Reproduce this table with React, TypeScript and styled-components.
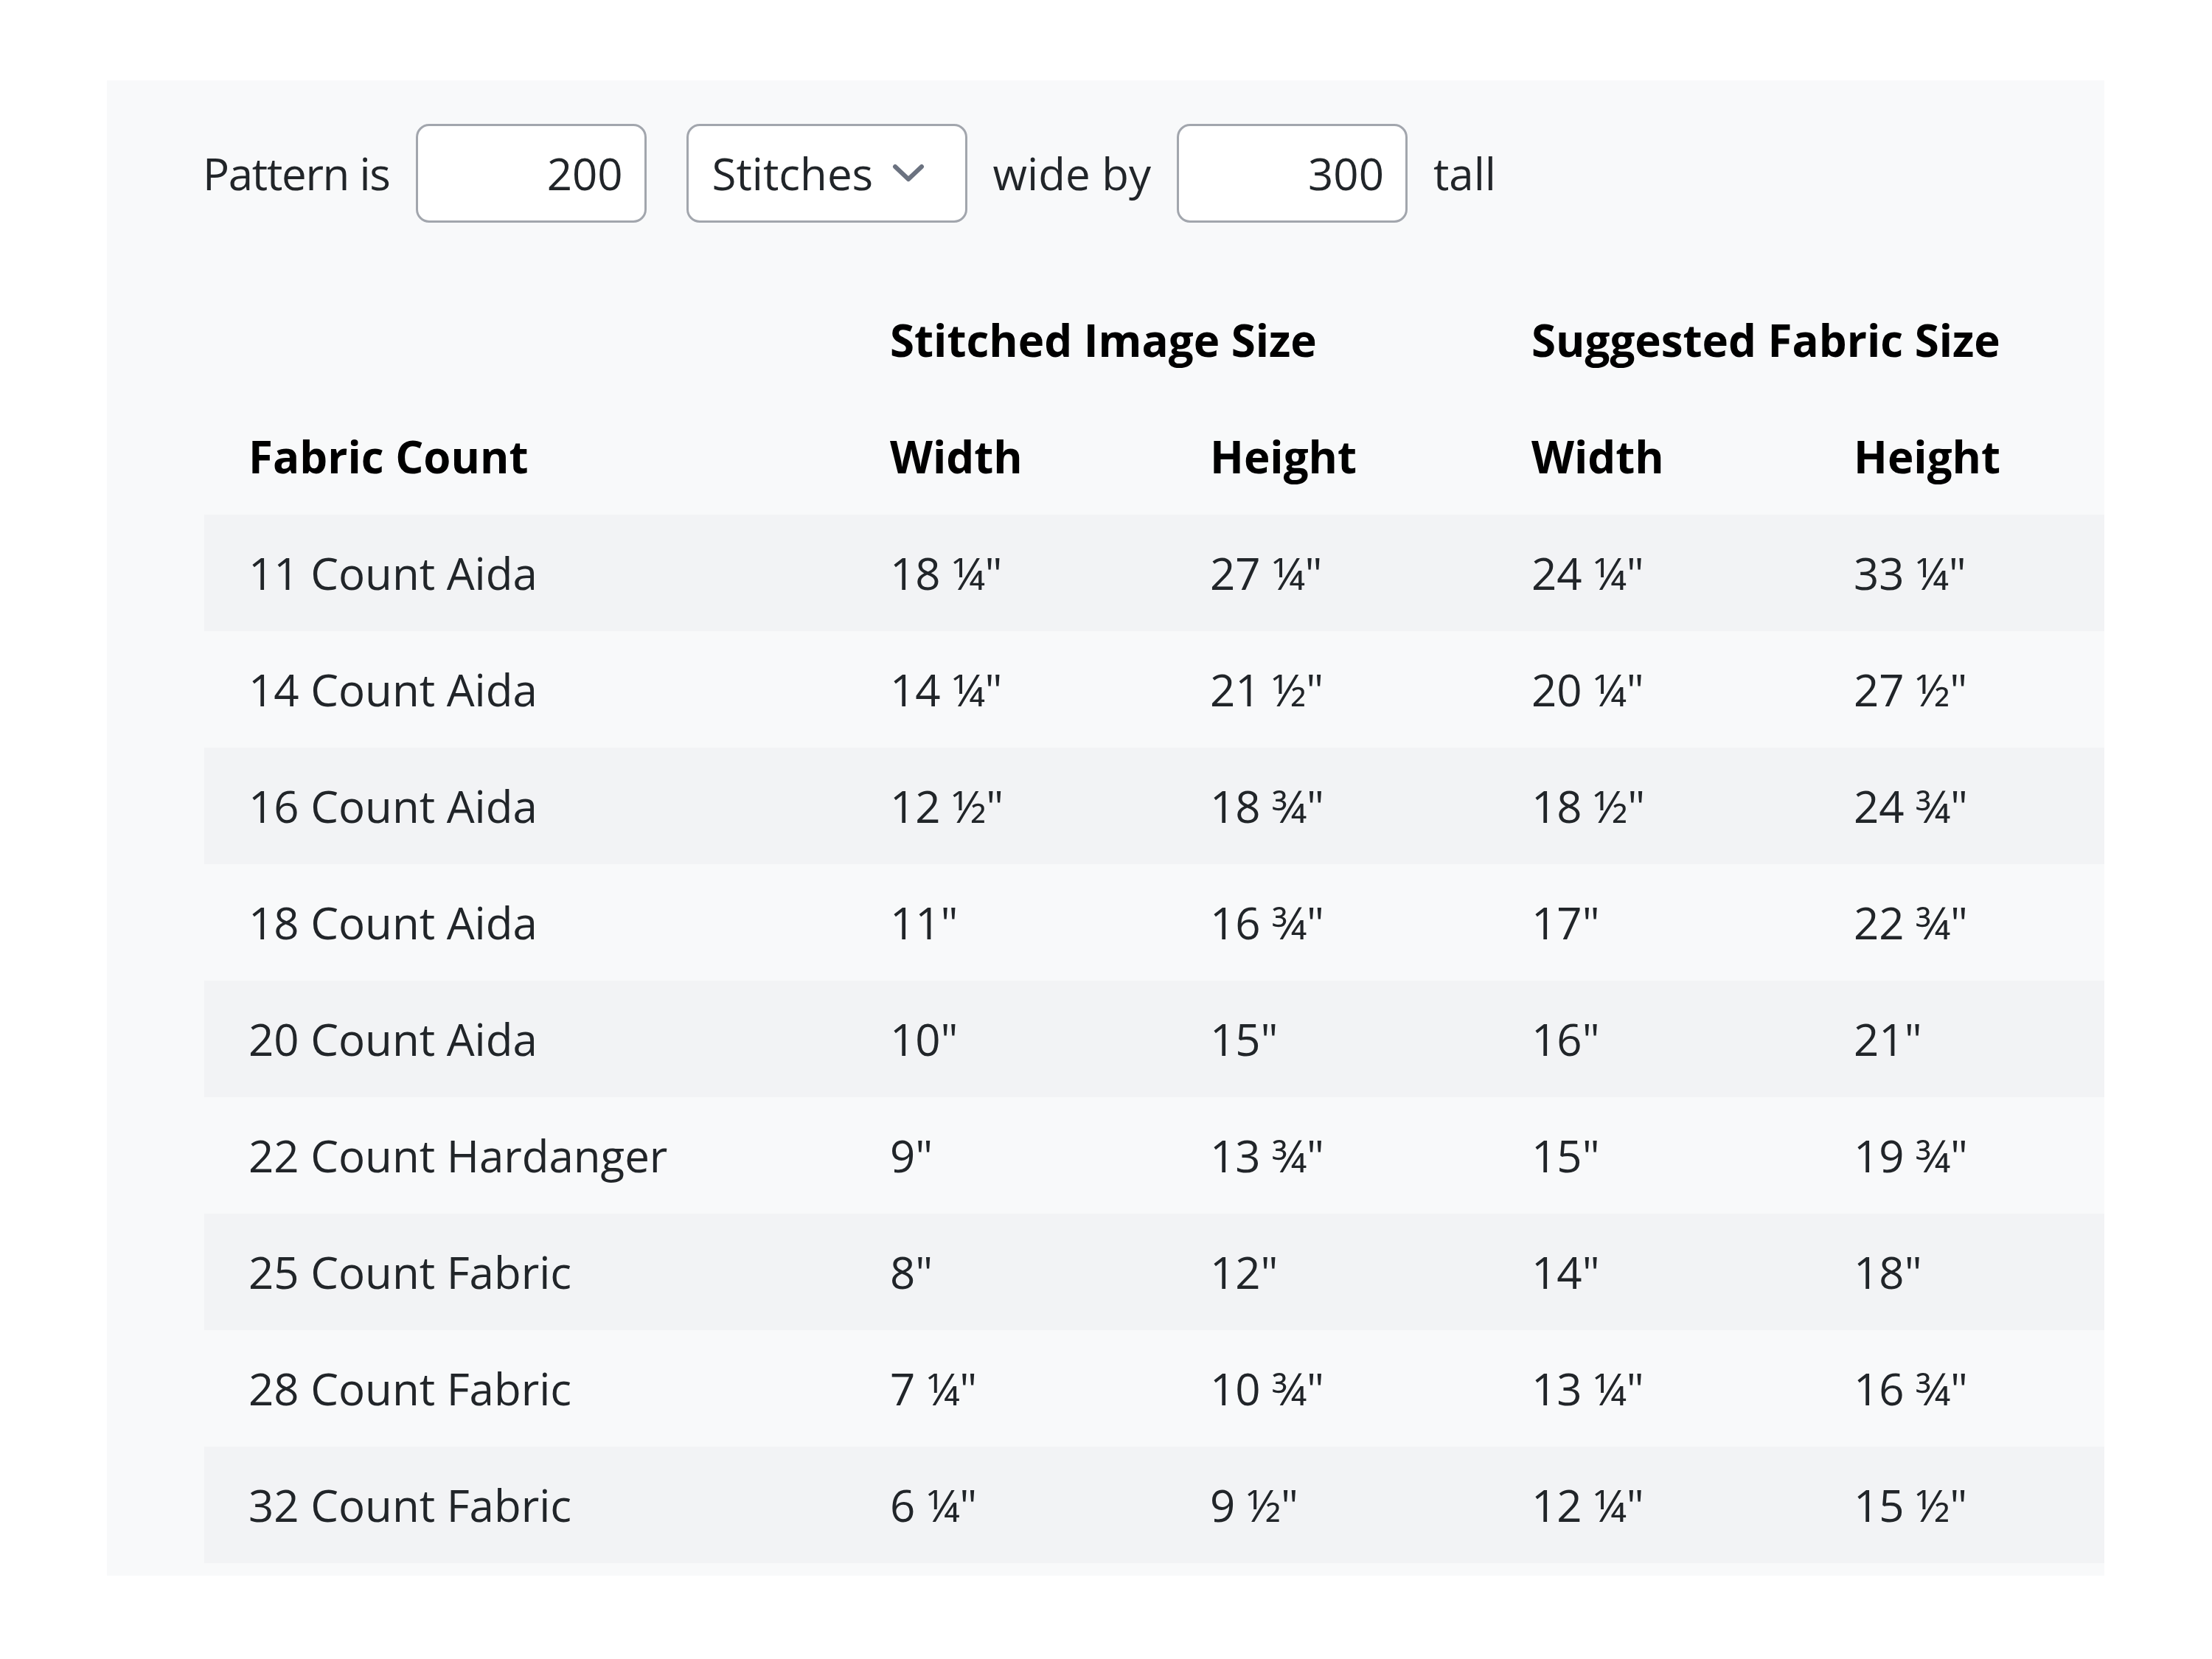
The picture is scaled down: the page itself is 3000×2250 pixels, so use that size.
import React from "react";
import styled, { createGlobalStyle } from "styled-components";

const GlobalStyle = createGlobalStyle`
  html, body {
    margin: 0;
    padding: 0;
    background: #ffffff;
  }
  body {
    font-family: "Open Sans", "Noto Sans", "Liberation Sans", sans-serif;
    color: #212529;
  }
`;

const Page = styled.div`
  padding: 109px 0 0 145px;
  width: 2709px;
`;

const Panel = styled.section`
  background: #f8f9fa;
  padding: 59px 0 17px 130px;
  display: flex;
  flex-direction: column;
  gap: 80px;
`;

const Toolbar = styled.div`
  display: flex;
  align-items: center;
  gap: 35px;
  height: 134px;
  font-size: 60px;
  color: #212529;
`;

const Label = styled.span<{ $tracking?: number }>`
  white-space: nowrap;
  letter-spacing: ${(p) => p.$tracking ?? 0}px;
`;

const NumberInput = styled.input`
  box-sizing: border-box;
  width: 313px;
  height: 134px;
  border: 3px solid #a2a6ad;
  border-radius: 18px;
  background: #ffffff;
  padding: 0 29px 0 20px;
  text-align: right;
  font-family: inherit;
  font-size: 60px;
  color: #212529;
  outline: none;
`;

const SelectBox = styled.div<{ $offset?: number }>`
  box-sizing: border-box;
  width: 381px;
  height: 134px;
  margin-left: ${(p) => p.$offset ?? 0}px;
  border: 3px solid #a2a6ad;
  border-radius: 18px;
  background: #ffffff;
  padding: 0 55px 0 32px;
  display: flex;
  align-items: center;
  justify-content: space-between;
  font-size: 60px;
  color: #212529;
`;

const Chevron = () => (
  <svg width="44" height="26" viewBox="0 0 44 26" fill="none">
    <polyline
      points="4,4 22,21 40,4"
      stroke="#6b7280"
      strokeWidth="6"
      strokeLinecap="round"
      strokeLinejoin="round"
    />
  </svg>
);

const Table = styled.table`
  width: 2577px;
  margin-left: 2px;
  table-layout: fixed;
  border-collapse: collapse;
  font-size: 60px;
`;

const HeadCell = styled.th`
  height: 158px;
  padding: 0 0 0 60px;
  text-align: left;
  vertical-align: middle;
  font-weight: 700;
  color: #000000;
  white-space: nowrap;
`;

const Row = styled.tr<{ $striped: boolean }>`
  background: ${(p) => (p.$striped ? "#f2f3f5" : "transparent")};
`;

const Cell = styled.td`
  height: 158px;
  padding: 0 0 0 60px;
  vertical-align: middle;
  color: #212529;
  white-space: nowrap;
`;

const rows: [string, string, string, string, string][] = [
  ["11 Count Aida", "18 ¼\"", "27 ¼\"", "24 ¼\"", "33 ¼\""],
  ["14 Count Aida", "14 ¼\"", "21 ½\"", "20 ¼\"", "27 ½\""],
  ["16 Count Aida", "12 ½\"", "18 ¾\"", "18 ½\"", "24 ¾\""],
  ["18 Count Aida", "11\"", "16 ¾\"", "17\"", "22 ¾\""],
  ["20 Count Aida", "10\"", "15\"", "16\"", "21\""],
  ["22 Count Hardanger", "9\"", "13 ¾\"", "15\"", "19 ¾\""],
  ["25 Count Fabric", "8\"", "12\"", "14\"", "18\""],
  ["28 Count Fabric", "7 ¼\"", "10 ¾\"", "13 ¼\"", "16 ¾\""],
  ["32 Count Fabric", "6 ¼\"", "9 ½\"", "12 ¼\"", "15 ½\""],
];

const colWidths = [870, 434, 436, 437, 400];

export default function App() {
  return (
    <>
      <GlobalStyle />
      <Page>
        <Panel>
          <Toolbar>
            <Label $tracking={-1.3}>Pattern is</Label>
            <NumberInput defaultValue="200" />
            <SelectBox $offset={19}>
              <span>Stitches</span>
              <Chevron />
            </SelectBox>
            <Label>wide by</Label>
            <NumberInput defaultValue="300" />
            <Label>tall</Label>
          </Toolbar>
          <Table>
            <colgroup>
              {colWidths.map((w, i) => (
                <col key={i} style={{ width: w }} />
              ))}
            </colgroup>
            <thead>
              <tr>
                <HeadCell />
                <HeadCell colSpan={2}>Stitched Image Size</HeadCell>
                <HeadCell colSpan={2}>Suggested Fabric Size</HeadCell>
              </tr>
              <tr>
                <HeadCell>Fabric Count</HeadCell>
                <HeadCell>Width</HeadCell>
                <HeadCell>Height</HeadCell>
                <HeadCell>Width</HeadCell>
                <HeadCell>Height</HeadCell>
              </tr>
            </thead>
            <tbody>
              {rows.map((r, i) => (
                <Row key={r[0]} $striped={i % 2 === 0}>
                  {r.map((c, j) => (
                    <Cell key={j}>{c}</Cell>
                  ))}
                </Row>
              ))}
            </tbody>
          </Table>
        </Panel>
      </Page>
    </>
  );
}
